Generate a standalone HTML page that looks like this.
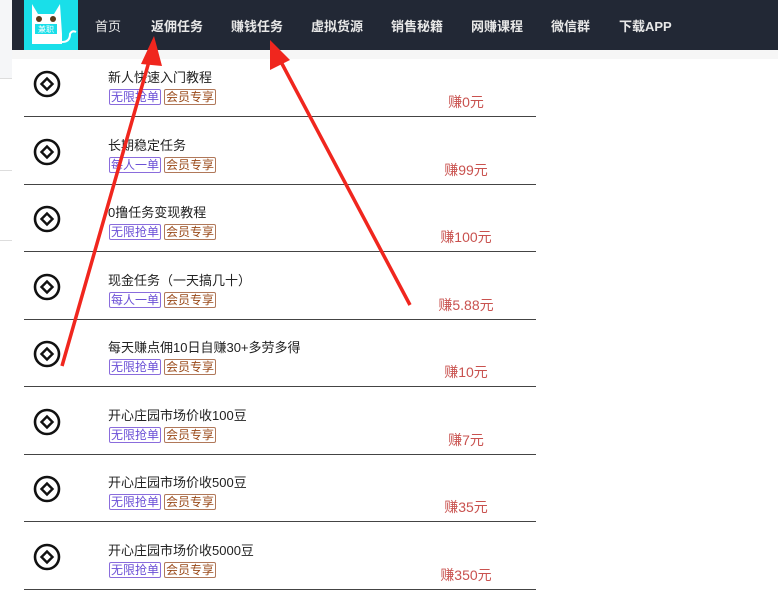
<!DOCTYPE html>
<html><head><meta charset="utf-8"><style>
body{margin:0;width:778px;height:609px;overflow:hidden;background:#fff;font-family:"Liberation Sans","Noto Sans CJK SC",sans-serif;position:relative}
.left{position:absolute;left:0;top:0;width:12px;height:78px;background:#f5f6f8;border-bottom:1px solid #ddd}
.hl{position:absolute;left:0;width:12px;height:1px;background:#ddd}
.hdr{position:absolute;left:12px;top:0;width:766px;height:50px;background:#222835}
.band{position:absolute;left:12px;top:50px;width:766px;height:9px;background:#f6f6f6}
.logo{position:absolute;left:24px;top:0;width:54px;height:50px;background:#19dfe9}
.nav{position:absolute;top:16px;color:#e8e8e8;font-size:13px;font-weight:bold}
.row{position:absolute;left:24px;width:512px;height:67px;border-bottom:1px solid #444}
.ic{position:absolute;left:9px;top:21px;width:28px;height:28px}
.t{position:absolute;left:84px;top:18px;font-size:13px;color:#222}
.tags{position:absolute;left:85px;top:40px;font-size:12px;line-height:14px}
.tg{display:inline-block;border:1px solid #8a6cdc;color:#6b4fd6;padding:0 1px;margin-right:3px;border-radius:2px}
.tg.b{border-color:#b0785a;color:#9a4a1a}
.p{position:absolute;left:380px;top:43px;width:124px;text-align:center;color:#c9524f;font-size:14px}
</style></head><body>
<div class="left"></div><div class="hl" style="top:170px"></div><div class="hl" style="top:240px"></div>
<div class="hdr"></div><div class="band"></div>
<div class="logo"><svg width="54" height="50"><path d="M8 4 L14 14 L30 14 L36 4 L38 34 L8 34Z" fill="#fff"/><circle cx="15" cy="19" r="3" fill="#5a3a1a"/><circle cx="29" cy="19" r="3" fill="#5a3a1a"/><rect x="11" y="24" width="22" height="10" fill="#19dfe9"/><text x="22" y="32" font-size="8" fill="#fff" text-anchor="middle">兼职</text><rect x="8" y="34" width="30" height="10" fill="#fff"/><path d="M38 42 Q46 42 46 34 Q48 30 52 32" stroke="#fff" stroke-width="2" fill="none"/></svg></div>
<div class="nav" style="left:95px;font-weight:normal">首页</div>
<div class="nav" style="left:151px">返佣任务</div>
<div class="nav" style="left:231px">赚钱任务</div>
<div class="nav" style="left:311px">虚拟货源</div>
<div class="nav" style="left:391px">销售秘籍</div>
<div class="nav" style="left:471px">网赚课程</div>
<div class="nav" style="left:551px">微信群</div>
<div class="nav" style="left:619px">下载APP</div>

<div class="row" style="top:49px"><svg class="ic" viewBox="0 0 28 28"><circle cx="14" cy="14" r="12" fill="none" stroke="#111" stroke-width="2.6"/><path d="M14 8.5 L19.5 14 L14 19.5 L8.5 14Z" fill="none" stroke="#111" stroke-width="2.4"/></svg><div class="t">新人快速入门教程</div><div class="tags"><span class="tg">无限抢单</span><span class="tg b">会员专享</span></div><div class="p">赚0元</div></div>
<div class="row" style="top:117px"><svg class="ic" viewBox="0 0 28 28"><circle cx="14" cy="14" r="12" fill="none" stroke="#111" stroke-width="2.6"/><path d="M14 8.5 L19.5 14 L14 19.5 L8.5 14Z" fill="none" stroke="#111" stroke-width="2.4"/></svg><div class="t">长期稳定任务</div><div class="tags"><span class="tg">每人一单</span><span class="tg b">会员专享</span></div><div class="p">赚99元</div></div>
<div class="row" style="top:184px"><svg class="ic" viewBox="0 0 28 28"><circle cx="14" cy="14" r="12" fill="none" stroke="#111" stroke-width="2.6"/><path d="M14 8.5 L19.5 14 L14 19.5 L8.5 14Z" fill="none" stroke="#111" stroke-width="2.4"/></svg><div class="t">0撸任务变现教程</div><div class="tags"><span class="tg">无限抢单</span><span class="tg b">会员专享</span></div><div class="p">赚100元</div></div>
<div class="row" style="top:252px"><svg class="ic" viewBox="0 0 28 28"><circle cx="14" cy="14" r="12" fill="none" stroke="#111" stroke-width="2.6"/><path d="M14 8.5 L19.5 14 L14 19.5 L8.5 14Z" fill="none" stroke="#111" stroke-width="2.4"/></svg><div class="t">现金任务（一天搞几十）</div><div class="tags"><span class="tg">每人一单</span><span class="tg b">会员专享</span></div><div class="p">赚5.88元</div></div>
<div class="row" style="top:319px"><svg class="ic" viewBox="0 0 28 28"><circle cx="14" cy="14" r="12" fill="none" stroke="#111" stroke-width="2.6"/><path d="M14 8.5 L19.5 14 L14 19.5 L8.5 14Z" fill="none" stroke="#111" stroke-width="2.4"/></svg><div class="t">每天赚点佣10日自赚30+多劳多得</div><div class="tags"><span class="tg">无限抢单</span><span class="tg b">会员专享</span></div><div class="p">赚10元</div></div>
<div class="row" style="top:387px"><svg class="ic" viewBox="0 0 28 28"><circle cx="14" cy="14" r="12" fill="none" stroke="#111" stroke-width="2.6"/><path d="M14 8.5 L19.5 14 L14 19.5 L8.5 14Z" fill="none" stroke="#111" stroke-width="2.4"/></svg><div class="t">开心庄园市场价收100豆</div><div class="tags"><span class="tg">无限抢单</span><span class="tg b">会员专享</span></div><div class="p">赚7元</div></div>
<div class="row" style="top:454px"><svg class="ic" viewBox="0 0 28 28"><circle cx="14" cy="14" r="12" fill="none" stroke="#111" stroke-width="2.6"/><path d="M14 8.5 L19.5 14 L14 19.5 L8.5 14Z" fill="none" stroke="#111" stroke-width="2.4"/></svg><div class="t">开心庄园市场价收500豆</div><div class="tags"><span class="tg">无限抢单</span><span class="tg b">会员专享</span></div><div class="p">赚35元</div></div>
<div class="row" style="top:522px"><svg class="ic" viewBox="0 0 28 28"><circle cx="14" cy="14" r="12" fill="none" stroke="#111" stroke-width="2.6"/><path d="M14 8.5 L19.5 14 L14 19.5 L8.5 14Z" fill="none" stroke="#111" stroke-width="2.4"/></svg><div class="t">开心庄园市场价收5000豆</div><div class="tags"><span class="tg">无限抢单</span><span class="tg b">会员专享</span></div><div class="p">赚350元</div></div>

<svg style="position:absolute;left:0;top:0" width="778" height="609">
<line x1="62" y1="366" x2="150" y2="58" stroke="#f0261e" stroke-width="3.5"/>
<polygon points="154,36 141,64 162,66" fill="#f0261e"/>
<line x1="410" y1="305" x2="280" y2="60" stroke="#f0261e" stroke-width="3.5"/>
<polygon points="270,40 270,70 290,60" fill="#f0261e"/>
</svg>
</body></html>
